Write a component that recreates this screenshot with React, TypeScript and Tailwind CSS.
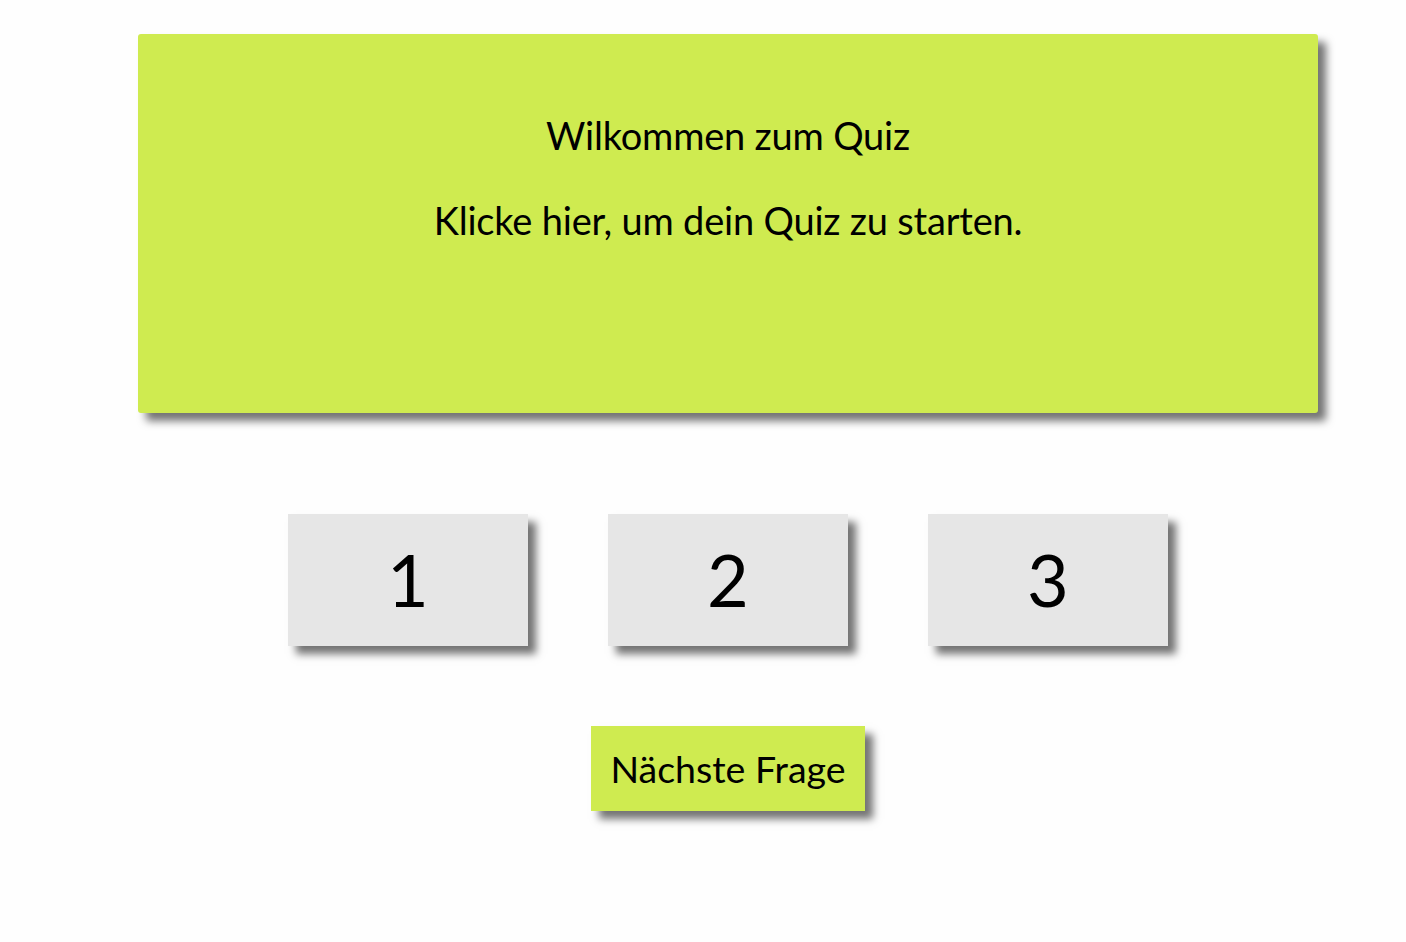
import React from "react";

export default function App() {
  const font = { fontFamily: '"Gill Sans", Lato, "Noto Sans", sans-serif' };
  return (
    <div className="min-h-[942px] w-full bg-[#fefefe] text-black" style={font}>
      <div className="ml-[138px] w-[1180px] pt-[34px] flex flex-col items-center">
        <div className="w-full h-[379px] rounded-[3px] bg-[#cfeb50] shadow-[8px_8px_8px_rgba(0,0,0,0.55)] flex flex-col items-center pt-[77px]">
          <p className="text-[38px] leading-[48px] tracking-[-0.2px]">Wilkommen zum Quiz</p>
          <p className="text-[38px] leading-[48px] mt-[37px] tracking-[-0.2px]">Klicke hier, um dein Quiz zu starten.</p>
        </div>
        <div className="mt-[101px] flex gap-[80px]">
          {["1", "2", "3"].map((n) => (
            <div
              key={n}
              className="w-[240px] h-[132px] bg-[#e6e6e6] shadow-[8px_8px_8px_rgba(0,0,0,0.55)] flex items-center justify-center text-[72px] leading-none pb-[2px]"
            >
              {n}
            </div>
          ))}
        </div>
        <div className="mt-[80px] w-[274px] h-[85px] bg-[#cfeb50] shadow-[8px_8px_8px_rgba(0,0,0,0.55)] flex items-center justify-center text-[37.5px] leading-none">
          Nächste Frage
        </div>
      </div>
    </div>
  );
}
